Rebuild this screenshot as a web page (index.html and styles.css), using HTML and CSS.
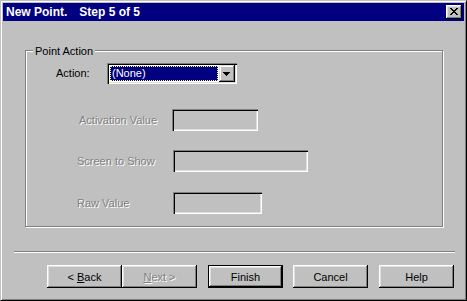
FILE: index.html
```html
<!DOCTYPE html>
<html lang="en">
<head>
    <meta charset="UTF-8">
    <title>New Point. Step 5 of 5</title>
    <link rel="stylesheet" href="styles.css">
</head>
<body>
    <div class="window">
        <div class="titlebar">
            <span class="title">New Point.</span>
            <span class="title title-step">Step 5 of 5</span>
            <span class="close-btn">
                <svg width="8" height="7" viewBox="0 0 8 7" shape-rendering="crispEdges">
                    <path fill="#000" d="M0 0h2v1H0zM6 0h2v1H6zM1 1h2v1H1zM5 1h2v1H5zM2 2h4v1H2zM3 3h2v1H3zM2 4h4v1H2zM1 5h2v1H1zM5 5h2v1H5zM0 6h2v1H0zM6 6h2v1H6z"/>
                </svg>
            </span>
        </div>

        <div class="dialog">
            <div class="group">
                <div class="group-title">Point Action</div>

                <div class="row row-action">
                    <span class="lbl lbl-action">Action:</span>
                    <div class="combo">
                        <div class="combo-value"><span class="combo-sel">(None)</span></div>
                        <div class="combo-btn">
                            <svg width="7" height="4" viewBox="0 0 7 4" shape-rendering="crispEdges">
                                <path fill="#000" d="M0 0h7v1H0zM1 1h5v1H1zM2 2h3v1H2zM3 3h1v1H3z"/>
                            </svg>
                        </div>
                    </div>
                </div>

                <div class="row row-activation">
                    <span class="lbl lbl-activation disabled">Activation Value</span>
                    <div class="field field-activation"></div>
                </div>

                <div class="row row-screen">
                    <span class="lbl disabled">Screen to Show</span>
                    <div class="field field-screen"></div>
                </div>

                <div class="row row-raw">
                    <span class="lbl disabled">Raw Value</span>
                    <div class="field field-raw"></div>
                </div>
            </div>

            <div class="separator"></div>

            <div class="buttons">
                <button class="btn">&lt; <u>B</u>ack</button>
                <button class="btn disabled"><u>N</u>ext &gt;</button>
                <button class="btn btn-default btn-finish">Finish</button>
                <button class="btn btn-cancel">Cancel</button>
                <button class="btn btn-help">Help</button>
            </div>
        </div>
    </div>
</body>
</html>
```

FILE: styles.css
```css
body {
    margin: 0;
    font-family: "Liberation Sans", Arial, sans-serif;
    font-size: 11px;
    color: #000;
    background: #c0c0c0;
}
.window {
    width: 467px;
    height: 301px;
    box-sizing: border-box;
    border: 1px solid;
    border-color: #c0c0c0 #000 #000 #c0c0c0;
    box-shadow: inset 1px 1px #fff, inset -1px -1px #808080;
    padding: 2px;
    background: #c0c0c0;
    overflow: hidden;
}

/* title bar */
.titlebar {
    height: 18px;
    background: #000080;
    display: flex;
    align-items: center;
    padding-left: 3px;
}
.title {
    color: #fff;
    font-weight: bold;
    font-size: 12px;
    line-height: 14px;
}
.title-step {
    margin-left: 12px;
}
.close-btn {
    margin-left: auto;
    margin-right: 2px;
    width: 16px;
    height: 14px;
    box-sizing: border-box;
    padding: 3px 0 0 4px;
    background: #c0c0c0;
    box-shadow: inset -1px -1px #000, inset 1px 1px #fff, inset -2px -2px #808080, inset 2px 2px #dfdfdf;
}
.close-btn svg {
    display: block;
}

/* dialog body */
.dialog {
    padding: 0 9px 0 11px;
}
.group {
    margin: 29px 12px 0 11px;
    height: 177px;
    box-sizing: border-box;
    border: 1px solid #808080;
    box-shadow: inset 1px 1px #fff, 1px 1px #fff;
}
.group-title {
    width: fit-content;
    margin: -6px 0 0 7px;
    padding: 0 2px;
    line-height: 13px;
    background: #c0c0c0;
}
.row {
    display: flex;
    align-items: center;
}
.row-action {
    margin-top: 5px;
}
.row-activation {
    margin-top: 25px;
}
.row-screen {
    margin-top: 19px;
}
.row-raw {
    margin-top: 20px;
}
.lbl {
    box-sizing: border-box;
    flex: 0 0 147px;
    padding-left: 51px;
    line-height: 13px;
}
.lbl-action {
    flex-basis: 81px;
    padding-left: 30px;
}
.lbl-activation {
    flex-basis: 146px;
    padding-left: 53px;
}
.disabled {
    color: #808080;
    text-shadow: 1px 1px 0 #fff;
}

/* combo box */
.combo {
    width: 130px;
    height: 21px;
    box-sizing: border-box;
    padding: 2px;
    display: flex;
    background: #fff;
    box-shadow: inset 1px 1px #808080, inset 2px 2px #000, inset -1px -1px #fff, inset -2px -2px #dfdfdf;
}
.combo-value {
    flex: 1;
    padding: 1px;
    display: flex;
}
.combo-sel {
    flex: 1;
    background: #000080;
    color: #fff;
    border: 1px dotted #ffff80;
    padding-left: 1px;
    line-height: 13px;
}
.combo-btn {
    width: 16px;
    height: 17px;
    box-sizing: border-box;
    padding: 7px 0 0 4px;
    background: #c0c0c0;
    box-shadow: inset -1px -1px #000, inset 1px 1px #dfdfdf, inset -2px -2px #808080, inset 2px 2px #fff;
}
.combo-btn svg {
    display: block;
}

/* disabled edit fields */
.field {
    height: 22px;
    background: #c0c0c0;
    box-shadow: inset 1px 1px #808080, inset 2px 2px #000, inset -1px -1px #fff, inset -2px -2px #dfdfdf;
}
.field-activation {
    width: 86px;
}
.field-screen {
    width: 135px;
}
.field-raw {
    width: 89px;
}

.separator {
    margin-top: 24px;
    border-top: 1px solid #808080;
    border-bottom: 1px solid #fff;
}

/* buttons */
.buttons {
    display: flex;
    margin-top: 12px;
    padding-left: 33px;
}
.btn {
    width: 75px;
    height: 23px;
    box-sizing: border-box;
    padding: 0;
    border: none;
    background: #c0c0c0;
    font-family: inherit;
    font-size: 11px;
    color: #000;
    box-shadow: inset -1px -1px #000, inset 1px 1px #fff, inset -2px -2px #808080, inset 2px 2px #dfdfdf;
}
.btn.disabled {
    color: #808080;
}
.btn-default {
    border: 1px solid #000;
}
.btn-finish {
    margin-left: 11px;
}
.btn-cancel {
    margin-left: 10px;
}
.btn-help {
    margin-left: 11px;
}
```
